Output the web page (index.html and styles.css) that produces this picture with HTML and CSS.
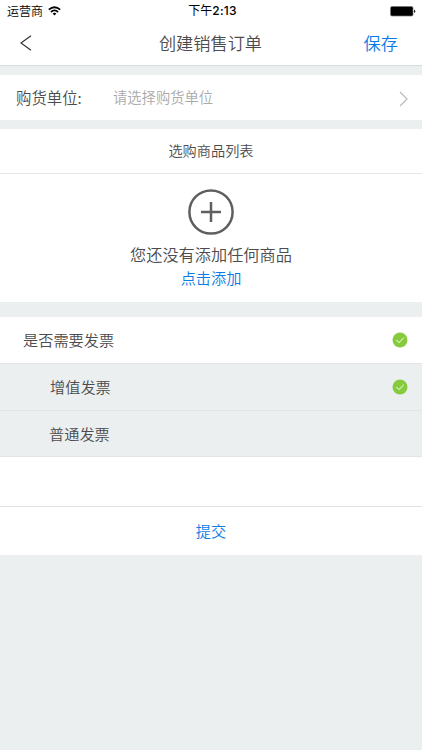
FILE: index.html
```html
<!DOCTYPE html>
<html lang="zh-CN">
<head>
<meta charset="utf-8">
<title>创建销售订单</title>
<link rel="stylesheet" href="styles.css">
</head>
<body>
<header class="header">
  <div class="status">
    <div class="carrier"><span>运营商</span>
      <svg class="wifi" width="13" height="10" viewBox="0 0 13 10" fill="none" stroke="#000" stroke-width="1.7"><path d="M.8 3.7Q6.5-1.2 12.2 3.7M2.9 6Q6.5 2.9 10.1 6"/><path d="M4.600 7.400Q6.500 5.900 8.400 7.400L6.500 9.500Z" fill="#000" stroke="none"/></svg>
    </div>
    <div class="time">下午<b>2:13</b></div>
    <svg class="battery" width="26" height="11" viewBox="0 0 26 11"><rect x=".5" y=".5" width="22.500" height="9.500" rx="1.500" fill="#000" stroke="#777" stroke-width=".7"/><path d="M24 3.700Q25.300 4 25.300 5.300T24 6.900Z" fill="#222"/></svg>
  </div>
  <nav class="nav">
    <svg class="back" width="12" height="16" viewBox="0 0 12 16" fill="none" stroke="#333" stroke-width="1.200"><path d="M11 .8 1 8l10 7.200"/></svg>
    <h1 class="title">创建销售订单</h1>
    <a class="save">保存</a>
  </nav>
</header>
<section class="buyer">
  <span class="label">购货单位:</span>
  <span class="placeholder">请选择购货单位</span>
  <svg class="arrow" width="9" height="16" viewBox="0 0 9 16" fill="none" stroke="#b9b9b9" stroke-width="1.200"><path d="m1 1 7 7-7 7"/></svg>
</section>
<section class="goods">
  <h2 class="goods-title">选购商品列表</h2>
  <div class="empty">
    <svg class="plus" width="46" height="46" viewBox="0 0 46 46" fill="none" stroke="#5f5f5f"><circle cx="23" cy="23" r="21.600" stroke-width="2.500"/><path d="M13 23h20M23 13v20" stroke-width="2.500"/></svg>
    <p class="message">您还没有添加任何商品</p>
    <a class="add">点击添加</a>
  </div>
</section>
<section class="invoice">
  <div class="row main"><span>是否需要发票</span>
    <svg width="16" height="16" viewBox="0 0 16 16"><circle cx="8" cy="8" r="7.500" fill="#86cb3c"/><path d="m4.300 8 2.600 2.600 4.800-4.700" fill="none" stroke="#fff"/></svg>
  </div>
  <div class="row option vat"><span>增值发票</span>
    <svg width="16" height="16" viewBox="0 0 16 16"><circle cx="8" cy="8" r="7.500" fill="#86cb3c"/><path d="m4.300 8 2.600 2.600 4.800-4.700" fill="none" stroke="#fff"/></svg>
  </div>
  <div class="row option plain"><span>普通发票</span></div>
</section>
<div class="blank"></div>
<button class="submit">提交</button>
</body>
</html>
```
FILE: styles.css
```css
* { box-sizing: border-box; }
body {
  margin: 0;
  min-height: 750px;
  background: #ebeff0;
  color: #4c4c4c;
  font-family: "Noto Sans CJK SC", sans-serif;
  font-weight: 350;
}
svg { display: block; flex: none; }
h1, h2, p { margin: 0; font-weight: inherit; }
.header { height: 66px; background: #fff; border-bottom: 1px solid #d8dbdc; }
.status {
  display: grid;
  grid-template-columns: 1fr auto 1fr;
  align-items: center;
  height: 22px;
  padding: 0 6px 0 7px;
  color: #000;
  font-size: 12px;
  line-height: 20px;
}
.carrier { display: flex; align-items: center; gap: 5px; }
.carrier span, .time { padding-bottom: 2px; }
.wifi { margin-top: -2px; }
.time { padding-left: 2px; font-weight: 400; }
.time b { font-family: Inter, sans-serif; font-weight: 500; letter-spacing: .2px; }
.battery { justify-self: end; }
.nav {
  display: grid;
  grid-template-columns: 1fr auto 1fr;
  align-items: center;
  height: 43px;
  padding: 0 24px 0 20px;
  font-size: 17.2px;
  line-height: 41px;
}
.title { padding: 0 0 2px 3px; font-size: 17.2px; }
.save { justify-self: end; padding-bottom: 2px; }
.back { position: relative; top: -1px; }
.save, .add, .submit { color: #0a7be6; }
.buyer {
  display: flex;
  align-items: center;
  height: 45px;
  margin-top: 9px;
  padding: 0 14px 0 16px;
  background: #fff;
}
.label { width: 97px; padding-bottom: 1px; font-size: 15.4px; }
.placeholder { flex: 1; padding-bottom: 2px; color: #aaa; font-size: 14.3px; }
.arrow { margin-top: 2px; }
.goods { height: 173px; margin-top: 9px; background: #fff; }
.goods-title {
  height: 45px;
  border-bottom: 1px solid #e6e8e8;
  font-size: 14.2px;
  line-height: 42px;
  text-align: center;
}
.empty { display: flex; flex-direction: column; align-items: center; padding-top: 15px; }
.message { margin-top: 7px; font-size: 16.2px; line-height: 24px; }
.add { font-size: 15.2px; line-height: 23px; }
.invoice { margin-top: 15px; }
.row {
  display: flex;
  align-items: center;
  justify-content: space-between;
  height: 47px;
  padding: 0 14px 0 23px;
  border-bottom: 1px solid #e1e5e6;
  font-size: 15.2px;
}
.row span { padding-bottom: 2px; }
.main { background: #fff; }
.option { padding-left: 49px; }
.vat { padding-left: 50px; }
.plain { height: 46px; }
.blank { height: 49px; background: #fff; }
.submit {
  display: block;
  width: 100%;
  height: 49px;
  padding: 0 0 2px;
  border: 0;
  border-top: 1px solid #dfe2e3;
  background: #fff;
  font-family: inherit;
  font-size: 15.2px;
  font-weight: inherit;
}
```
